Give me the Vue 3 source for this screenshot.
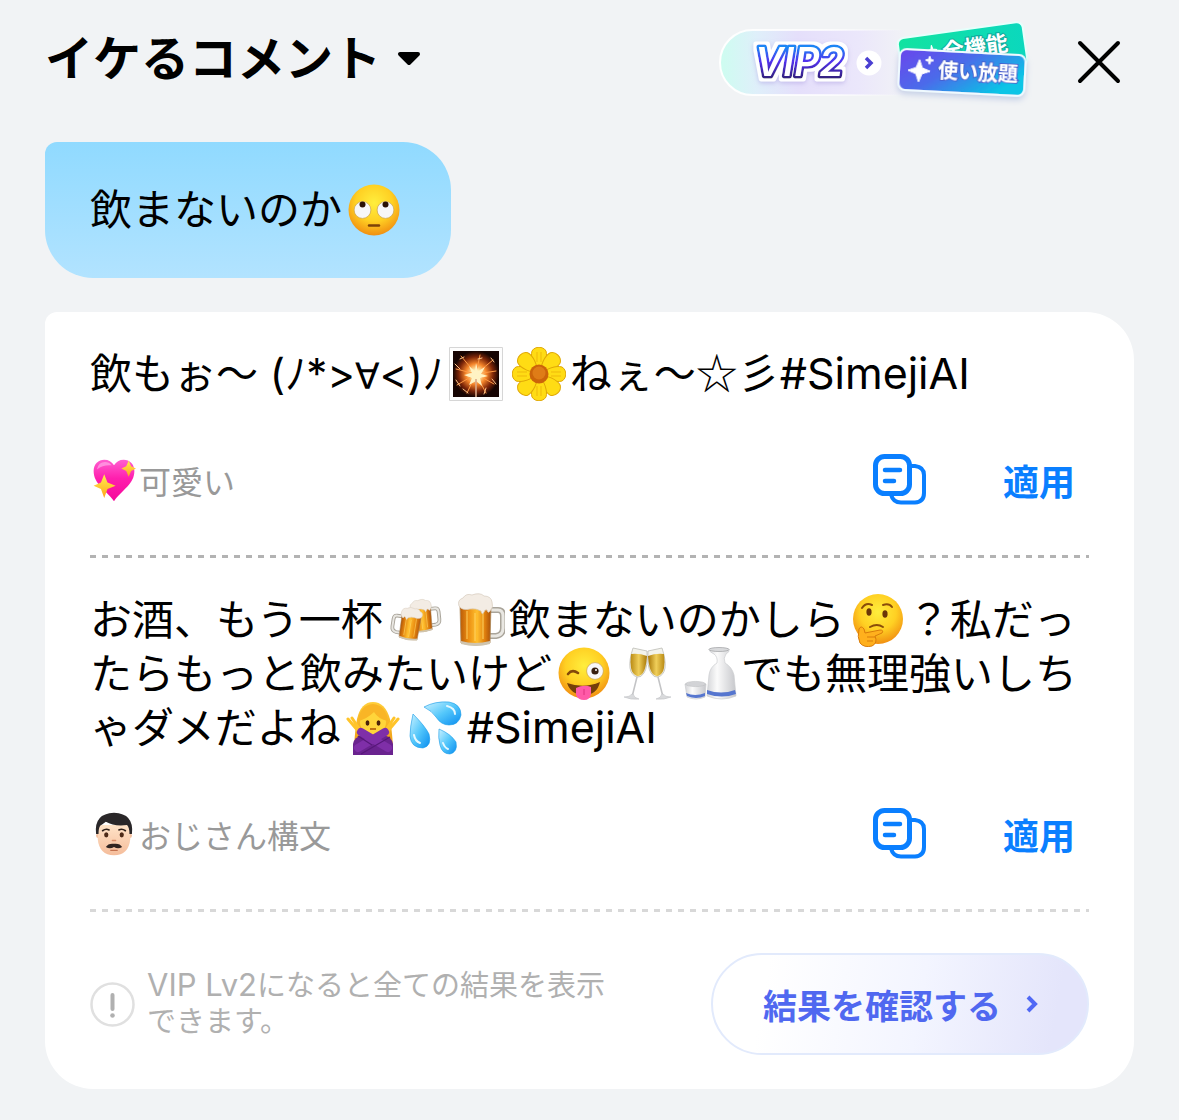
<script setup>
const message = [{ text: '飲まないのか' }, { emoji: 'rolling', label: '🙄' }]

const results = [
  {
    id: 'cute',
    body: [
      { text: '飲もぉ〜 (ﾉ*>' },
      { text: '∀', font: 'sign' },
      { text: '<)ﾉ' },
      { emoji: 'sparkler', label: '🎇' },
      { emoji: 'flower', label: '🌼' },
      { text: 'ねぇ〜☆彡', font: 'kana' },
      { text: '#SimejiAI', font: 'latin' },
    ],
    icon: 'heart',
    style: '可愛い',
  },
  {
    id: 'ojisan',
    body: [
      { text: 'お酒、もう一杯' },
      { emoji: 'cheers', label: '🍻' },
      { emoji: 'beer', label: '🍺' },
      { text: '飲まないのかしら' },
      { emoji: 'thinking', label: '🤔' },
      { text: '？私だったらもっと飲みたいけど' },
      { emoji: 'wink', label: '😜' },
      { emoji: 'champagne', label: '🥂' },
      { emoji: 'sake', label: '🍶' },
      { text: 'でも無理強いしちゃダメだよね' },
      { emoji: 'nogood', label: '🙅‍♀️' },
      { emoji: 'drops', label: '💦' },
      { text: '#SimejiAI', font: 'latin' },
    ],
    icon: 'man',
    style: 'おじさん構文',
  },
]
</script>

<template>
  <svg class="sprite" width="0" height="0" aria-hidden="true">
    <defs>
      <radialGradient id="face" cx=".5" cy=".36" r=".66">
        <stop offset="0" stop-color="#ffee3d" />
        <stop offset=".55" stop-color="#ffd023" />
        <stop offset="1" stop-color="#f08a10" />
      </radialGradient>
      <radialGradient id="burst">
        <stop offset="0" stop-color="#fff" />
        <stop offset=".2" stop-color="#ffe9a8" />
        <stop offset=".45" stop-color="#f5852a" />
        <stop offset=".75" stop-color="#7c2508" />
        <stop offset="1" stop-color="#160402" />
      </radialGradient>
      <linearGradient id="ale">
        <stop offset="0" stop-color="#b85a08" />
        <stop offset=".25" stop-color="#e98a10" />
        <stop offset=".55" stop-color="#ffbf2e" />
        <stop offset=".8" stop-color="#e0800e" />
        <stop offset="1" stop-color="#a95008" />
      </linearGradient>
      <linearGradient id="wine">
        <stop offset="0" stop-color="#b98a14" />
        <stop offset=".5" stop-color="#f0cf5a" />
        <stop offset="1" stop-color="#a87708" />
      </linearGradient>
      <linearGradient id="china">
        <stop offset="0" stop-color="#d4d5d8" />
        <stop offset=".35" stop-color="#fbfbfb" />
        <stop offset="1" stop-color="#c6c7cb" />
      </linearGradient>
      <linearGradient id="pink" x2="0" y2="1">
        <stop offset="0" stop-color="#ff5fd0" />
        <stop offset=".45" stop-color="#ff1fae" />
        <stop offset="1" stop-color="#f5089a" />
      </linearGradient>
      <linearGradient id="gold" x2="0" y2="1">
        <stop offset="0" stop-color="#fff04e" />
        <stop offset="1" stop-color="#ffa51c" />
      </linearGradient>
      <linearGradient id="water" x2="1" y2="1">
        <stop offset="0" stop-color="#cdf2ff" />
        <stop offset=".5" stop-color="#55c8fb" />
        <stop offset="1" stop-color="#0a8df0" />
      </linearGradient>
      <linearGradient id="skin" x2="0" y2="1">
        <stop offset="0" stop-color="#ffe3c8" />
        <stop offset="1" stop-color="#f5bd9b" />
      </linearGradient>
      <linearGradient id="hair" x2="0" y2="1">
        <stop offset="0" stop-color="#ffcf3a" />
        <stop offset="1" stop-color="#ee9a12" />
      </linearGradient>
    </defs>

    <symbol id="rolling" viewBox="0 0 54 54">
      <circle cx="27" cy="27" r="25.5" fill="url(#face)" />
      <g fill="#f7f7f8" stroke="#c9a04a" stroke-width=".7">
        <circle cx="15.500" cy="27" r="8.400" />
        <circle cx="38.500" cy="27" r="8.400" />
      </g>
      <circle cx="15.500" cy="21.500" r="3" fill="#2a1206" />
      <circle cx="38.500" cy="21.500" r="3" fill="#2a1206" />
      <path d="M22 42.500h10" stroke="#7c4208" stroke-width="2.400" stroke-linecap="round" />
    </symbol>

    <symbol id="sparkler" viewBox="0 0 54 54">
      <path d="M.5.5h53v53H.5z" fill="#fdfdfd" stroke="#d6d6d6" />
      <path d="M4 4h46v46H4z" fill="url(#burst)" />
      <g stroke="#ff9a45" stroke-width="1" stroke-linecap="round" fill="none">
        <path d="M27 27 12 9M27 27 31 8M27 27 44 13M27 27 47 24M27 27 45 37M27 27 37 46M27 27 18 46M27 27 8 38M27 27 7 22" />
        <path d="m11 12 4-2M29 12l4-1M42 11l3 4M43 32l4 5M37 41l-2 6M14 42l5 4M7 33l4 6M6 17l5 5" stroke="#ffc58a" />
      </g>
      <path d="m27 16 2 8 7-4-4 7 7 2-8 2 2 8-6-5-7 4 3-7-8-3 8-2-3-7 6 5z" fill="#fff3c4" />
      <path d="M27 32v18" stroke="#d9a98a" stroke-width="1.600" />
    </symbol>

    <symbol id="flower" viewBox="0 0 54 54">
      <g fill="#ffdc14" stroke="#e0a806" stroke-width="1">
        <path id="petal" d="M27 26c-5-6-9-16-7-22 3-5 11-5 14 0 2 6-2 16-7 22z" />
        <use href="#petal" transform="rotate(45 27 27)" />
        <use href="#petal" transform="rotate(90 27 27)" />
        <use href="#petal" transform="rotate(135 27 27)" />
        <use href="#petal" transform="rotate(180 27 27)" />
        <use href="#petal" transform="rotate(225 27 27)" />
        <use href="#petal" transform="rotate(270 27 27)" />
        <use href="#petal" transform="rotate(315 27 27)" />
      </g>
      <path d="M25 5v10M29 5v10M25 39v10M29 39v10M5 25h10M5 29h10M39 25h10M39 29h10" stroke="#efb90a" />
      <circle cx="27" cy="27" r="9.500" fill="#cc640a" />
      <circle cx="27" cy="26" r="6.500" fill="#df7c17" />
    </symbol>

    <symbol id="mug" viewBox="0 0 54 54">
      <path d="M36 17h8q5 0 5 6v12q0 7-7 8h-6" fill="none" stroke="#a9a49a" stroke-width="6" />
      <path d="M36 17h8q5 0 5 6v12q0 7-7 8h-6" fill="none" stroke="#e9e7e2" stroke-width="3" />
      <path d="M6 12h31l-1 38q-14 4-29 0z" fill="url(#ale)" stroke="#a98556" stroke-width=".8" />
      <path d="M13 18v28M21 20v28M29 18v28" stroke="#ffd869" stroke-width="1.500" opacity=".6" />
      <path d="M7 48q14 4 29 0v3q-14 4-29 0z" fill="#cfc4ae" />
      <path d="M5 13Q3 7 9 5q3-5 9-3 8-3 12 1 7 0 8 6 2 5-2 9-2 3-3-1-2-1-3 2-2 4-3-1-5-3-11-2-8 2-11-3z" fill="#f3ece4" stroke="#d6cabb" stroke-width=".7" />
    </symbol>

    <symbol id="beer" viewBox="0 0 54 54"><use href="#mug" x="3" width="54" height="54" /></symbol>

    <symbol id="cheers" viewBox="0 0 54 54">
      <g transform="translate(20 4) rotate(-6 14 18)"><use href="#mug" width="34" height="38" /></g>
      <g transform="translate(36 12) scale(-1 1) rotate(-9 14 18)"><use href="#mug" width="34" height="38" /></g>
    </symbol>

    <symbol id="thinking" viewBox="0 0 54 54">
      <circle cx="28" cy="26" r="25" fill="url(#face)" />
      <path d="M12 15q4-6 10-3M33 12q6-2 9 2" fill="none" stroke="#8a4d0a" stroke-width="2" stroke-linecap="round" />
      <ellipse cx="19" cy="19" rx="2.600" ry="3.700" fill="#6b3608" />
      <ellipse cx="35" cy="21" rx="2.600" ry="3.700" fill="#6b3608" />
      <path d="M20 34q7-4 13 0" fill="none" stroke="#8a4d0a" stroke-width="2" stroke-linecap="round" />
      <path d="M9 36q2-4 5 0l1 4 15-3q4 0 2 3l-7 3q3 7-3 10-8 2-12-3-3-6-1-14z" fill="#ffb01d" stroke="#d97c0a" stroke-width="1" />
      <path d="M17 44h8M17 48h6" stroke="#d97c0a" />
    </symbol>

    <symbol id="wink" viewBox="0 0 54 54">
      <circle cx="27" cy="26" r="25.5" fill="url(#face)" />
      <path d="M11 27q4-5 10-1" fill="none" stroke="#84480a" stroke-width="2.600" stroke-linecap="round" />
      <circle cx="38" cy="24" r="8.400" fill="#f8f8f8" stroke="#c9a04a" stroke-width=".7" />
      <circle cx="38" cy="24" r="3.600" fill="#38200f" />
      <circle cx="39" cy="23" r="1" fill="#fff" />
      <path d="M10 36q17 6 33-1-3 13-16 13T10 36z" fill="#75400a" />
      <path d="M19 41q8-4 15-1v7q-1 6-7 6t-8-5z" fill="#ff5aa8" />
      <path d="M27 42v6" stroke="#e0337f" />
    </symbol>

    <symbol id="champagne" viewBox="0 0 54 54">
      <g id="flute">
        <path d="M13 1 27 4Q28 20 24 26q-3 5-7 4-6-2-7-9-1-8 3-20z" fill="#f3f3ec" stroke="#bdbdb6" stroke-width=".8" />
        <path d="M11 7q8-1 16 2-1 13-4 17-3 4-6 3-5-2-6-8-1-6 0-14z" fill="url(#wine)" />
        <path d="m17 30-5 20" stroke="#c3c4c6" stroke-width="1.600" />
        <path d="M12 47q-2 3-8 3 7 3 15 2-5-1-6-5z" fill="#d9dadc" stroke="#c0c1c4" stroke-width=".6" />
      </g>
      <use href="#flute" transform="translate(55 0) scale(-1 1)" />
    </symbol>

    <symbol id="sake" viewBox="0 0 54 54">
      <path d="M26 2h20q1 3-3 5-3 4-1 9 7 4 9 12l2 21q-14 6-29 0l2-21q1-8 8-12 1-6-3-9-5-2-5-5z" fill="url(#china)" stroke="#cccdd0" stroke-width=".7" />
      <path d="M24 43q14 5 28 0l1 4q-14 5-29 0z" fill="#5676cf" />
      <ellipse cx="36" cy="2.500" rx="10" ry="2" fill="#d9dadc" stroke="#a7a8ab" stroke-width=".8" />
      <path d="M2 37h21l-1 13q-9 4-18 0z" fill="url(#china)" stroke="#cccdd0" stroke-width=".7" />
      <ellipse cx="12.500" cy="37" rx="10" ry="2.600" fill="#d2d3d6" stroke="#b9babd" stroke-width=".5" />
      <path d="M3 46q9 4 19 0v3q-9 4-18 0z" fill="#5676cf" />
    </symbol>

    <symbol id="nogood" viewBox="0 0 54 54">
      <path d="M8 46q1-17 3-28Q15 1 27 1t17 17q2 11 3 28z" fill="url(#hair)" />
      <ellipse cx="27" cy="21" rx="13" ry="13" fill="#ffd53a" />
      <path d="M12 20Q14 4 27 3q13 1 15 17-10-2-14-9-7 7-16 9z" fill="#f9b526" />
      <ellipse cx="21.500" cy="22" rx="1.900" ry="2.700" fill="#4b230b" />
      <ellipse cx="32.500" cy="22" rx="1.900" ry="2.700" fill="#4b230b" />
      <path d="M24 28h6" stroke="#b05b0b" stroke-width="1.600" />
      <path d="M2 18 13 31M52 18 41 31M6 17l8 12M48 17l-8 12" stroke="#ffc42a" stroke-width="3" stroke-linecap="round" />
      <path d="M7 54V43q1-7 10-9h20q9 2 10 9v11z" fill="#6a238f" />
      <path d="m15 31 27 16M39 31 12 47" stroke="#7f2fa8" stroke-width="8" stroke-linecap="round" />
      <path d="m12 35 14 9M44 36 15 53" stroke="#571779" stroke-width="1.200" fill="none" />
    </symbol>

    <symbol id="drops" viewBox="0 0 54 54">
      <g fill="url(#water)" stroke="#159be8" stroke-width=".6">
        <path d="M15 6q11 -6 25-5 12 2 12 13-2 10-12 10-8 0-13-8-4-6-12-10z" />
        <path d="M4 13q12 12 16 20 3 12-6 14-12 0-13-12 0-9 3-22z" />
        <path d="M30 28q12 5 17 13 2 10-6 12-8 0-10-9-2-7-1-16z" />
      </g>
      <path d="M38 5q8 2 8 8M5 34q1 6 6 8M34 42q2 5 5 6" fill="none" stroke="#e4f8ff" stroke-width="2" stroke-linecap="round" />
    </symbol>

    <symbol id="heart" viewBox="0 0 54 54">
      <path d="M27 53C17 39 2 32 2 16 2 7 8 2 15 2q8 0 12 7 4-7 12-7c7 0 13 5 13 14 0 16-15 23-25 37z" fill="url(#pink)" />
      <path d="M6 14q2-9 10-9 5 0 8 4-10-1-18 5z" fill="#ff9ee4" opacity=".8" />
      <path d="m15 20 4 10 10 4-10 4-4 11-4-11-9-4 9-4z" fill="url(#gold)" />
      <path d="m45 3 3 7 6 3-6 3-3 7-3-7-6-3 6-3z" fill="url(#gold)" />
    </symbol>

    <symbol id="man" viewBox="0 0 54 54">
      <circle cx="8" cy="29" r="3" fill="#f3b995" />
      <circle cx="46" cy="29" r="3" fill="#f3b995" />
      <path d="M7 16h40v17q-2 20-20 20T7 33z" fill="url(#skin)" />
      <path d="M5 27Q2 2 27 1q25 1 22 26l-3 0q0-8-3-11-16 2-26-4-4 3-7 5-2 3-2 10z" fill="#2a2729" />
      <path d="M13 23q4-3 8-1M33 22q4-2 8 1" stroke="#30211a" stroke-width="2" fill="none" stroke-linecap="round" />
      <ellipse cx="17.500" cy="28" rx="2.600" ry="3.200" fill="#4e2a17" />
      <ellipse cx="36.500" cy="28" rx="2.600" ry="3.200" fill="#4e2a17" />
      <path d="M25 35h4" stroke="#d98e6b" stroke-width="1.600" stroke-linecap="round" />
      <path d="M17 43q3-5 10-4 7-1 10 4-5 3-10 0-5 3-10 0z" fill="#302421" />
      <path d="M23 47h8" stroke="#c4724f" stroke-width="1.500" stroke-linecap="round" />
    </symbol>
  </svg>

  <div class="page">
    <header class="top">
      <button class="mode" type="button" aria-haspopup="listbox">
        <span>イケるコメント</span>
        <svg width="24" height="16" viewBox="0 0 24 16" aria-hidden="true">
          <path d="M3 3h18L12 12z" fill="#000" stroke="#000" stroke-width="4" stroke-linejoin="round" />
        </svg>
      </button>

      <button class="vip" type="button" aria-label="VIP2 全機能 使い放題">
        <svg width="320" height="88" viewBox="0 0 320 88">
          <defs>
            <linearGradient id="pill">
              <stop offset="0" stop-color="#cdfdf0" />
              <stop offset=".2" stop-color="#dfeffa" />
              <stop offset=".42" stop-color="#e5dffb" />
              <stop offset=".75" stop-color="#ebe7fb" />
              <stop offset="1" stop-color="#f1f2f6" />
            </linearGradient>
            <linearGradient id="rim">
              <stop offset="0" stop-color="#fff" />
              <stop offset=".6" stop-color="#fff" stop-opacity=".7" />
              <stop offset="1" stop-color="#fff" stop-opacity="0" />
            </linearGradient>
            <linearGradient id="word" x2="0" y2="1">
              <stop offset=".2" stop-color="#1b86f5" />
              <stop offset=".5" stop-color="#5230ee" />
              <stop offset=".85" stop-color="#33207e" />
            </linearGradient>
            <linearGradient id="green">
              <stop offset="0" stop-color="#12e3a0" />
              <stop offset="1" stop-color="#0bd8bd" />
            </linearGradient>
            <linearGradient id="violet" x2="1" y2=".5">
              <stop offset="0" stop-color="#6a45ec" />
              <stop offset=".5" stop-color="#4b6bea" />
              <stop offset="1" stop-color="#08c5e6" />
            </linearGradient>
            <filter id="halo" x="-20%" y="-30%" width="140%" height="170%">
              <feMorphology in="SourceAlpha" operator="dilate" radius="3" result="wide" />
              <feFlood flood-color="#fff" />
              <feComposite in2="wide" operator="in" result="white" />
              <feDropShadow in="white" dx="0" dy="2" stdDeviation="2" flood-color="#a99be0" flood-opacity=".5" result="glow" />
              <feMerge><feMergeNode in="glow" /><feMergeNode in="SourceGraphic" /></feMerge>
            </filter>
            <filter id="lift" x="-20%" y="-30%" width="140%" height="180%">
              <feDropShadow dx="0" dy="3" stdDeviation="3" flood-color="#7f98d0" flood-opacity=".4" />
            </filter>
          </defs>
          <path d="M190 12H37.500a32.500 32.500 0 0 0 0 65H190z" fill="url(#pill)" />
          <path d="M190 12H37.500a32.500 32.500 0 0 0 0 65H190" fill="none" stroke="url(#rim)" stroke-width="2" />
          <text class="vip-word" x="40" y="58" stroke="url(#word)" filter="url(#halo)">VIP2</text>
          <circle cx="154" cy="45" r="12.500" fill="#fff" />
          <path d="m151 40 5 5-5 5" fill="none" stroke="#4a3fd2" stroke-width="3.500" />
          <g transform="rotate(-8 247 30)">
            <rect x="184" y="12" width="126" height="44" rx="6" fill="url(#green)" stroke="#e6fffb" stroke-width="2" />
            <text class="tag tag-back" x="227" y="39" stroke="#12a99c">全機能</text>
            <path d="m217 23 1 4 4 1-4 1-1 4-1-4-4-1 4-1z" fill="#fff" stroke="#fff" />
            <path d="m208 27 2 6 5 2h-12l4-2z" fill="#fff" />
          </g>
          <g transform="rotate(3 247 55)" filter="url(#lift)">
            <rect x="184" y="34" width="126" height="41" rx="7" fill="url(#violet)" stroke="#effaff" stroke-width="2" />
            <path d="m204 44 3 8 8 3-8 3-3 8-3-8-8-3 8-3z" fill="#fff" stroke="#fff" stroke-linejoin="round" />
            <path d="m214 40 1 3 3 1-3 1-1 3-1-3-3-1 3-1z" fill="#fff" stroke="#fff" />
            <text class="tag" x="223" y="61" stroke="#4460cf">使い放題</text>
          </g>
        </svg>
      </button>

      <button class="close" type="button" aria-label="閉じる">
        <svg width="48" height="48" viewBox="0 0 48 48">
          <path d="m5 5 38 38M43 5 5 43" stroke="#000" stroke-width="4" stroke-linecap="round" />
        </svg>
      </button>
    </header>

    <main>
      <p class="bubble"><template v-for="(part, i) in message" :key="i"><svg v-if="part.emoji" class="emoji" role="img" :aria-label="part.label"><use :href="'#' + part.emoji" /></svg><span v-else>{{ part.text }}</span></template></p>

      <section class="card">
        <article v-for="item in results" :key="item.id" class="result">
          <p class="body"><template v-for="(part, i) in item.body" :key="i"><svg v-if="part.emoji" class="emoji" role="img" :aria-label="part.label"><use :href="'#' + part.emoji" /></svg><span v-else :class="part.font">{{ part.text }}</span></template></p>
          <div class="actions">
            <span class="style">
              <svg class="style-icon" aria-hidden="true"><use :href="'#' + item.icon" /></svg>
              <span>{{ item.style }}</span>
            </span>
            <button class="copy" type="button" aria-label="コピー">
              <svg width="54" height="54" viewBox="0 0 54 54" fill="none" stroke="#0a7fff" stroke-linecap="round">
                <rect x="2.500" y="3.500" width="34" height="37" rx="9" stroke-width="5" />
                <path d="M38 13h4q9 1 9 9v18q0 9-9 9.500H28q-8 0-10-8" stroke-width="4" />
                <path d="M12 17h15M12 28h9" stroke-width="4.500" />
              </svg>
            </button>
            <button class="apply" type="button">適用</button>
          </div>
        </article>

        <footer class="upsell">
          <svg class="info" width="45" height="45" viewBox="0 0 45 45" aria-hidden="true">
            <circle cx="22.500" cy="22.500" r="21" fill="none" stroke="#e0e0e0" stroke-width="2.500" />
            <path d="M22.500 13v14" stroke="#b0b0b0" stroke-width="4" stroke-linecap="round" />
            <circle cx="22.500" cy="33.500" r="2.300" fill="#b0b0b0" />
          </svg>
          <p><span class="level">VIP Lv2</span>になると全ての結果を表示できます。</p>
          <button class="unlock" type="button">
            <span>結果を確認する</span>
            <svg width="14" height="20" viewBox="0 0 14 20" aria-hidden="true">
              <path d="m3 3 7 7-7 7" fill="none" stroke="#5068f5" stroke-width="4" />
            </svg>
          </button>
        </footer>
      </section>
    </main>
  </div>
</template>

<style>
body {
  margin: 0;
  background: #f1f3f5;
}
</style>

<style scoped>
.sprite {
  position: absolute;
}

.page {
  font-family: Inter, "Noto Sans CJK JP", sans-serif;
  color: #000;
  padding: 18px 45px 31px;
}

button {
  border: 0;
  padding: 0;
  background: none;
  color: inherit;
  font: inherit;
  cursor: pointer;
}

svg {
  display: block;
  flex: none;
}

p {
  margin: 0;
}

.top {
  display: flex;
  align-items: center;
  gap: 40px;
  height: 88px;
  margin-bottom: 36px;
  padding-right: 11px;
}

.mode {
  display: flex;
  align-items: center;
  gap: 16px;
  margin-right: auto;
  padding-bottom: 6px;
  font-size: 48px;
  font-weight: 700;
  line-height: 56px;
  white-space: nowrap;
}

.vip-word {
  font: italic 600 39px Inter, sans-serif;
  fill: #fff;
  stroke-width: 5px;
  stroke-linejoin: round;
  paint-order: stroke;
}

.tag {
  font: 700 20px "Noto Sans CJK JP", sans-serif;
  fill: #fff;
  stroke-width: 2px;
  paint-order: stroke;
}

.tag-back {
  font-size: 22px;
}

.bubble,
.body {
  font-size: 42px;
  line-height: 54px;
  line-break: anywhere;
}

.bubble {
  width: fit-content;
  padding: 41px 46px 41px 45px;
  border-radius: 12px 48px 48px;
  background: linear-gradient(#90daff, #b2e3ff);
}

.emoji {
  display: inline-block;
  width: 54px;
  height: 54px;
  margin: -14px 4px -6px 5px;
  vertical-align: middle;
}

.latin {
  font-size: 43px;
  line-height: 1;
}

.kana {
  font-family: "Noto Sans CJK JP", sans-serif;
  line-height: 1;
}

.sign {
  font-family: "DejaVu Sans", sans-serif;
  font-size: 36px;
  line-height: 1;
}

.card {
  margin-top: 34px;
  padding: 0 45px 34px;
  border-radius: 12px 48px 48px;
  background: #fff;
}

.result {
  padding: 35px 0 51px;
  background: repeating-linear-gradient(90deg, #b3b3b3 0 6px, transparent 6px 12px) bottom / 100% 3px no-repeat;
}

.result:nth-child(2) {
  background-image: repeating-linear-gradient(90deg, #d8d8d8 0 6px, transparent 6px 12px);
}

.actions {
  display: flex;
  align-items: center;
  height: 54px;
  margin-top: 52px;
  padding-right: 14px;
}

.style {
  display: flex;
  align-items: center;
  gap: 3px;
  margin-right: auto;
  padding-left: 2px;
  color: #999;
  font-size: 32px;
}

.style-icon {
  width: 44px;
  height: 44px;
}

.apply {
  margin-left: 76px;
  color: #0a7fff;
  font-size: 36px;
  font-weight: 700;
}

.upsell {
  display: flex;
  align-items: center;
  padding-top: 41px;
}

.upsell p {
  flex: 1;
  margin: 0 90px 0 12px;
  color: #b0b0b0;
  font-size: 29px;
  line-height: 36px;
  line-break: anywhere;
}

.level {
  font-size: 31px;
  line-height: 1;
}

.unlock {
  display: flex;
  align-items: center;
  justify-content: center;
  gap: 24px;
  height: 102px;
  padding: 0 48px 0 50px;
  border: 2px solid #e2eafc;
  border-radius: 51px;
  background: linear-gradient(100deg, #fff 15%, #f3f5ff 55%, #e4e5fb 90%) border-box;
  color: #5068f0;
  font-size: 34px;
  font-weight: 700;
  white-space: nowrap;
}
</style>
